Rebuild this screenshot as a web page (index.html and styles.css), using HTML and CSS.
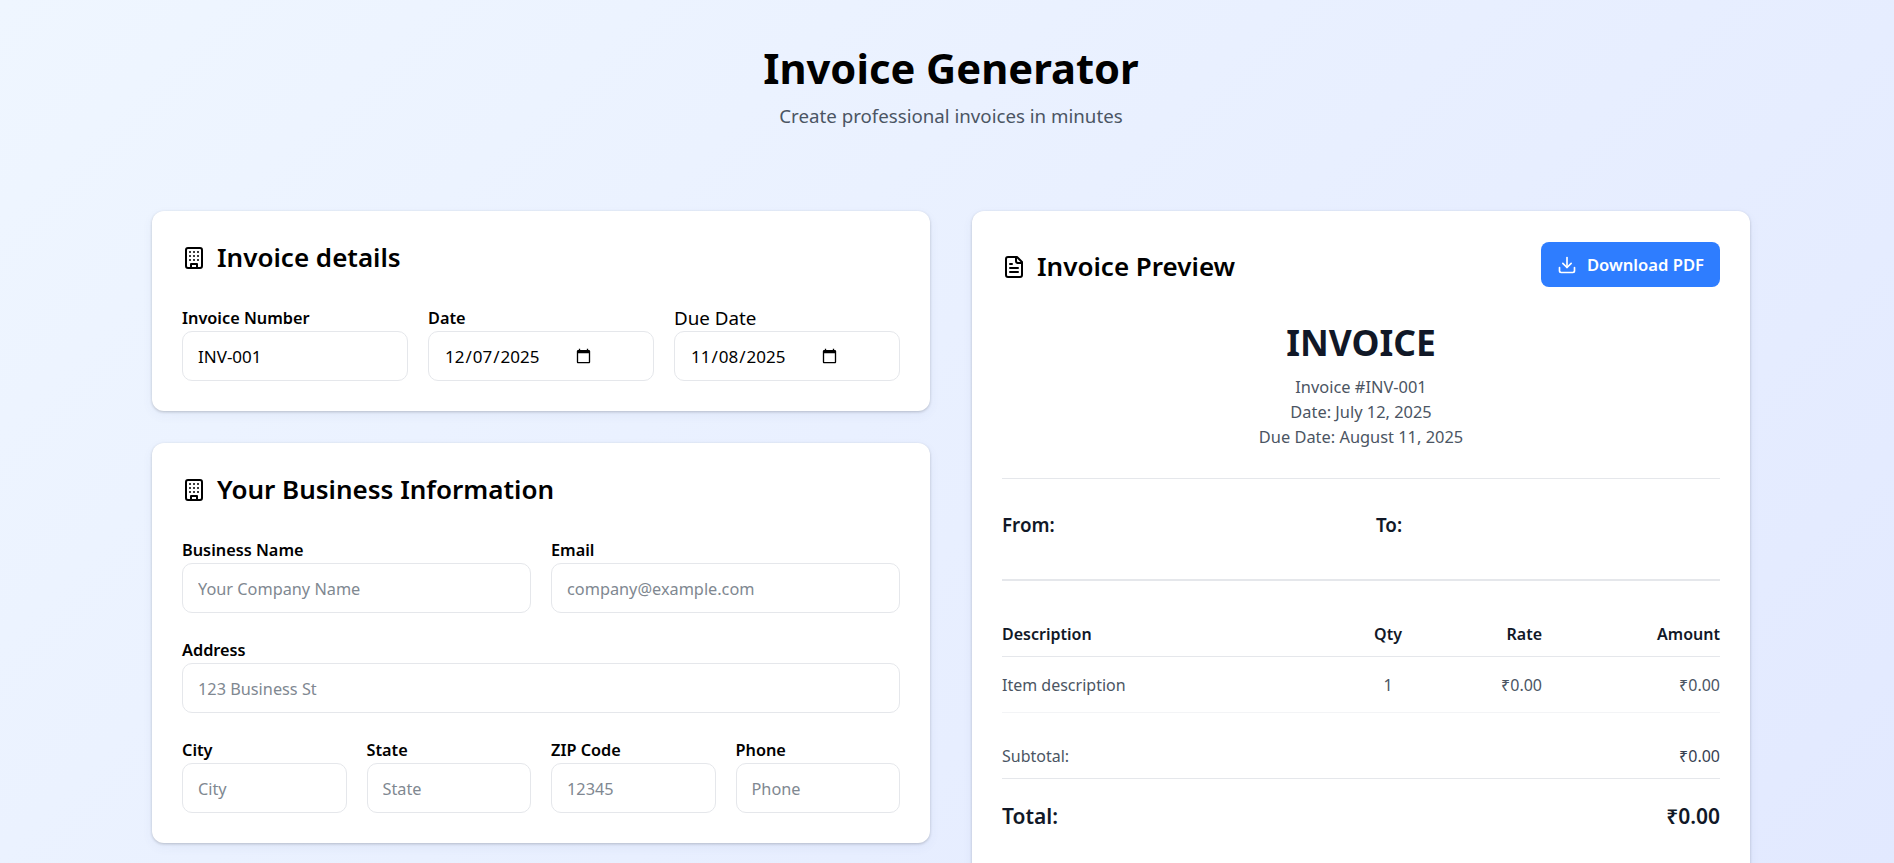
FILE: index.html
```html
<!DOCTYPE html>
<html lang="en">
<head>
    <meta charset="UTF-8">
    <meta name="viewport" content="width=device-width, initial-scale=1.0">
    <title>Invoice Generator</title>
    <link rel="stylesheet" href="styles.css">
</head>
<body>
    <div class="page">
        <header class="page-header">
            <h1>Invoice Generator</h1>
            <p>Create professional invoices in minutes</p>
        </header>

        <div class="layout">
            <div class="form-column">
                <section class="card">
                    <h2 class="card-title">
                        <svg class="icon" viewBox="0 0 24 24"><rect x="4" y="2" width="16" height="20" rx="2"/><path d="M9 22v-4h6v4"/><path d="M8 6h.01M12 6h.01M16 6h.01M8 10h.01M12 10h.01M16 10h.01M8 14h.01M12 14h.01M16 14h.01"/></svg>
                        Invoice details
                    </h2>
                    <div class="row row-3">
                        <div class="field">
                            <label for="inv-number">Invoice Number</label>
                            <input type="text" id="inv-number" value="INV-001">
                        </div>
                        <div class="field">
                            <label for="inv-date">Date</label>
                            <input type="date" id="inv-date" value="2025-12-07">
                        </div>
                        <div class="field">
                            <label for="inv-due" class="plain-label">Due Date</label>
                            <input type="date" id="inv-due" value="2025-11-08">
                        </div>
                    </div>
                </section>

                <section class="card">
                    <h2 class="card-title">
                        <svg class="icon" viewBox="0 0 24 24"><rect x="4" y="2" width="16" height="20" rx="2"/><path d="M9 22v-4h6v4"/><path d="M8 6h.01M12 6h.01M16 6h.01M8 10h.01M12 10h.01M16 10h.01M8 14h.01M12 14h.01M16 14h.01"/></svg>
                        Your Business Information
                    </h2>
                    <div class="row row-2">
                        <div class="field">
                            <label for="biz-name">Business Name</label>
                            <input type="text" id="biz-name" placeholder="Your Company Name">
                        </div>
                        <div class="field">
                            <label for="biz-email">Email</label>
                            <input type="text" id="biz-email" placeholder="company@example.com">
                        </div>
                    </div>
                    <div class="row">
                        <div class="field">
                            <label for="biz-address">Address</label>
                            <input type="text" id="biz-address" placeholder="123 Business St">
                        </div>
                    </div>
                    <div class="row row-4">
                        <div class="field">
                            <label for="biz-city">City</label>
                            <input type="text" id="biz-city" placeholder="City">
                        </div>
                        <div class="field">
                            <label for="biz-state">State</label>
                            <input type="text" id="biz-state" placeholder="State">
                        </div>
                        <div class="field">
                            <label for="biz-zip">ZIP Code</label>
                            <input type="text" id="biz-zip" placeholder="12345">
                        </div>
                        <div class="field">
                            <label for="biz-phone">Phone</label>
                            <input type="text" id="biz-phone" placeholder="Phone">
                        </div>
                    </div>
                </section>
            </div>

            <section class="card preview">
                <div class="preview-top">
                    <h2 class="card-title">
                        <svg class="icon" viewBox="0 0 24 24"><path d="M15 2H6a2 2 0 0 0-2 2v16a2 2 0 0 0 2 2h12a2 2 0 0 0 2-2V7Z"/><path d="M14 2v4a2 2 0 0 0 2 2h4"/><path d="M10 9H8"/><path d="M16 13H8"/><path d="M16 17H8"/></svg>
                        Invoice Preview
                    </h2>
                    <button class="download-btn">
                        <svg class="icon-small" viewBox="0 0 24 24"><path d="M21 15v4a2 2 0 0 1-2 2H5a2 2 0 0 1-2-2v-4"/><polyline points="7 10 12 15 17 10"/><line x1="12" y1="15" x2="12" y2="3"/></svg>
                        Download PDF
                    </button>
                </div>

                <div class="invoice-head">
                    <h3>INVOICE</h3>
                    <p>Invoice #INV-001</p>
                    <p>Date: July 12, 2025</p>
                    <p>Due Date: August 11, 2025</p>
                </div>

                <div class="parties">
                    <div>From:</div>
                    <div>To:</div>
                </div>

                <table class="items">
                    <thead>
                        <tr>
                            <th class="col-desc">Description</th>
                            <th class="col-qty">Qty</th>
                            <th class="col-rate">Rate</th>
                            <th class="col-amount">Amount</th>
                        </tr>
                    </thead>
                    <tbody>
                        <tr>
                            <td class="col-desc">Item description</td>
                            <td class="col-qty">1</td>
                            <td class="col-rate">₹0.00</td>
                            <td class="col-amount">₹0.00</td>
                        </tr>
                    </tbody>
                </table>

                <div class="subtotal"><span>Subtotal:</span><span class="subtotal-value">₹0.00</span></div>
                <div class="total"><span>Total:</span><span>₹0.00</span></div>
            </section>
        </div>
    </div>
</body>
</html>
```

FILE: styles.css
```css
* {
    box-sizing: border-box;
}
html, body {
    margin: 0;
    height: 863px;
    overflow: hidden;
}
body {
    font-family: "Noto Sans", "Open Sans", sans-serif;
    color: #000;
}
.page {
    min-height: 1300px;
    padding: 40px 144px 0 152px;
    background: linear-gradient(135deg, #eff6ff 0%, #e0e7ff 100%);
}
.page-header {
    text-align: center;
    margin-bottom: 81px;
}
.page-header h1 {
    margin: 0;
    font-size: 41.7px;
    line-height: 56px;
    font-weight: 700;
}
.page-header p {
    margin: 6px 0 0;
    font-size: 18.7px;
    line-height: 28px;
    color: #4b5563;
}
.layout {
    display: grid;
    grid-template-columns: repeat(2, minmax(0, 1fr));
    gap: 42px;
    align-items: start;
}
.form-column {
    display: flex;
    flex-direction: column;
    gap: 32px;
}
.card {
    background: #fff;
    border-radius: 12px;
    padding: 30px;
    box-shadow: 0 1px 3px rgba(0, 0, 0, 0.2), 0 4px 12px rgba(60, 80, 160, 0.06);
}
.card-title {
    display: flex;
    align-items: center;
    gap: 11px;
    margin: 0 0 33px;
    font-size: 26px;
    line-height: 33px;
    font-weight: 600;
}
.icon {
    width: 24px;
    height: 24px;
    fill: none;
    stroke: currentColor;
    stroke-width: 2;
    stroke-linecap: round;
    stroke-linejoin: round;
}
.icon-small {
    width: 20px;
    height: 20px;
    fill: none;
    stroke: currentColor;
    stroke-width: 2;
    stroke-linecap: round;
    stroke-linejoin: round;
}
.row {
    display: grid;
    gap: 20px;
    margin-bottom: 26px;
}
.row:last-child {
    margin-bottom: 0;
}
.row-2 {
    grid-template-columns: repeat(2, minmax(0, 1fr));
}
.row-3 {
    grid-template-columns: repeat(3, minmax(0, 1fr));
}
.row-4 {
    grid-template-columns: repeat(4, minmax(0, 1fr));
}
.field label {
    display: block;
    margin-bottom: 2px;
    font-size: 16.3px;
    line-height: 22px;
    font-weight: 600;
}
.field .plain-label {
    font-size: 18.8px;
    font-weight: 400;
}
.field input {
    display: block;
    width: 100%;
    height: 50px;
    padding: 1px 15px 0;
    border: 1px solid #e5e7eb;
    border-radius: 10px;
    background: #fff;
    font-family: inherit;
    font-size: 17px;
    color: #000;
}
.field input[type="date"] {
    padding-right: 59px;
}
.field input::placeholder {
    font-size: 16.3px;
    color: #808891;
}
.preview {
    height: 900px;
}
.preview-top {
    display: flex;
    justify-content: space-between;
    align-items: flex-start;
}
.preview-top .card-title {
    margin: 0;
    padding-top: 9px;
}
.download-btn {
    display: flex;
    align-items: center;
    gap: 10px;
    height: 45px;
    margin-top: 1px;
    padding: 0 16px;
    border: none;
    border-radius: 8px;
    background: #2e7dff;
    color: #fff;
    font-family: inherit;
    font-size: 16.6px;
    font-weight: 600;
}
.invoice-head {
    margin-top: 31px;
    padding-bottom: 29px;
    text-align: center;
    font-size: 16.4px;
    line-height: 25px;
    color: #4b5563;
    border-bottom: 1px solid #e5e7eb;
}
.invoice-head h3 {
    margin: 0 0 8px;
    font-size: 35.4px;
    line-height: 48px;
    font-weight: 700;
    color: #111827;
}
.invoice-head p {
    margin: 0;
}
.parties {
    display: grid;
    grid-template-columns: 1fr 1fr;
    gap: 30px;
    height: 102px;
    padding-top: 32px;
    border-bottom: 2px solid #e5e7eb;
    font-size: 18.8px;
    line-height: 28px;
    font-weight: 600;
    color: #111827;
}
.items {
    width: 100%;
    table-layout: fixed;
    border-collapse: collapse;
    margin-top: 27px;
    font-size: 16px;
}
.items th {
    height: 48px;
    padding: 4px 0 0;
    font-weight: 600;
    color: #111827;
    border-bottom: 1px solid #e5e7eb;
}
.items td {
    height: 56px;
    padding: 2px 0 0;
    color: #4b5563;
    border-bottom: 1px solid #f3f4f6;
}
.col-desc {
    width: 348px;
    text-align: left;
}
.col-qty {
    width: 76px;
    text-align: center;
}
.col-rate {
    width: 116px;
    text-align: right;
}
.col-amount {
    width: 178px;
    text-align: right;
}
.subtotal {
    display: flex;
    justify-content: space-between;
    align-items: center;
    height: 44px;
    margin-top: 22px;
    font-size: 16px;
    color: #4b5563;
    border-bottom: 1px solid #e5e7eb;
}
.subtotal-value {
    color: #374151;
}
.total {
    display: flex;
    justify-content: space-between;
    align-items: center;
    height: 74px;
    font-size: 21px;
    font-weight: 600;
    color: #111827;
}
```
